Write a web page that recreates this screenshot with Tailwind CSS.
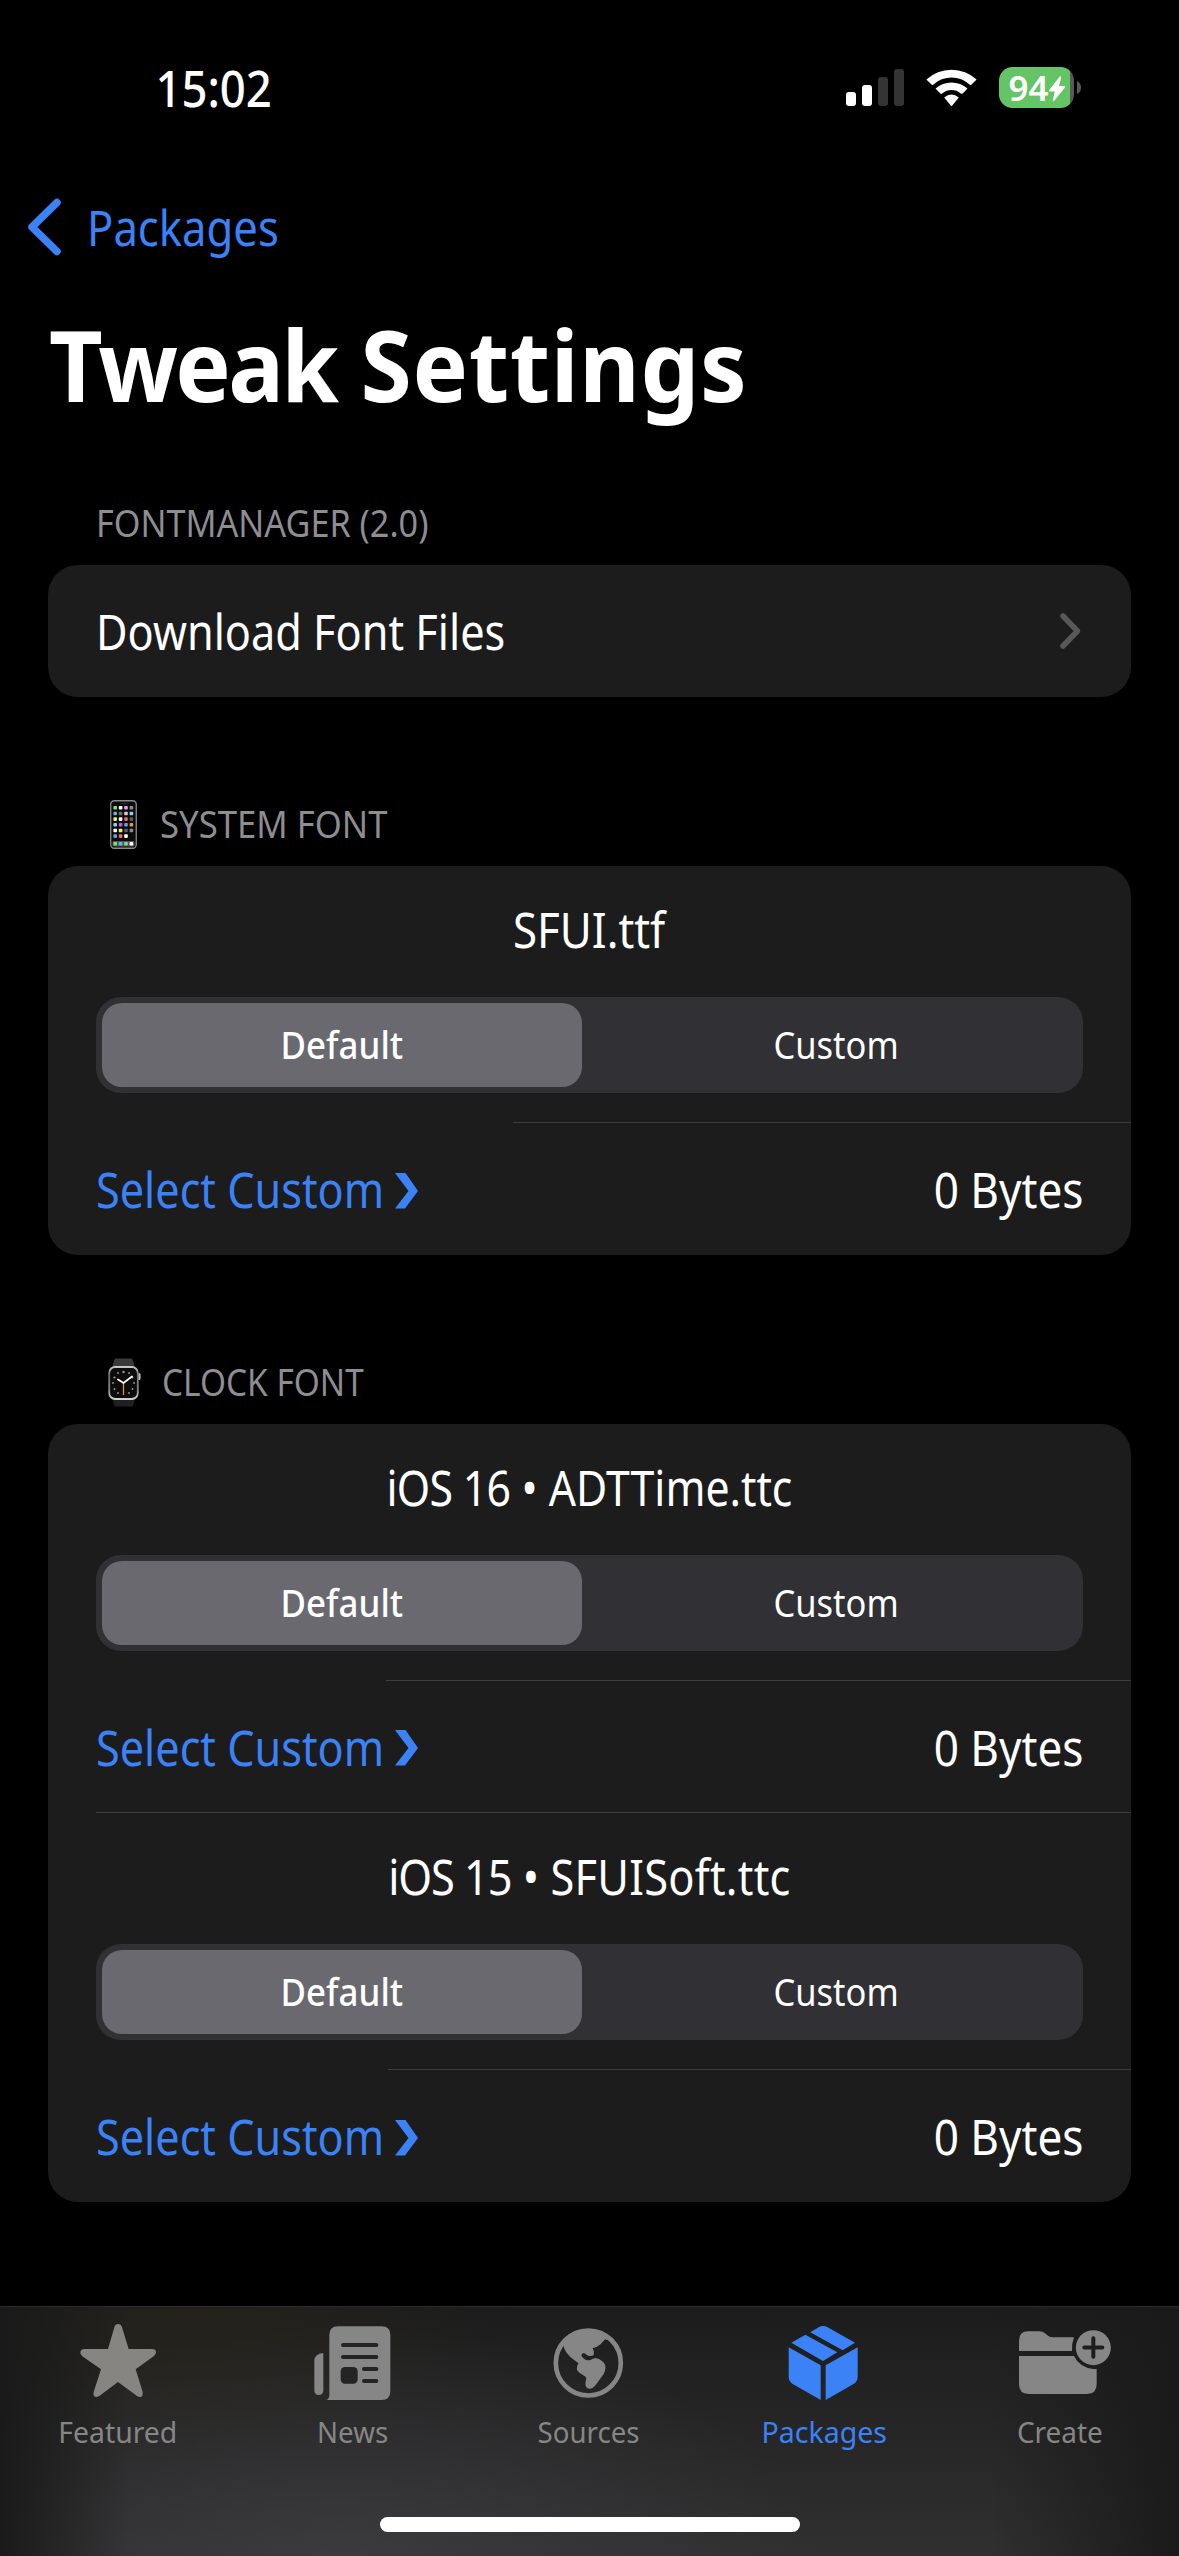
<!DOCTYPE html>
<html lang="en">
<head>
<meta charset="utf-8">
<title>Tweak Settings</title>
<script src="https://cdn.jsdelivr.net/npm/@tailwindcss/browser@4"></script>
</head>
<body class="bg-black text-white font-['Noto_Sans',sans-serif] antialiased">
<div class="w-[1179px] h-[2556px] flex flex-col overflow-hidden bg-black whitespace-nowrap">

  <!-- Status bar -->
  <header class="h-[175px] pl-[150px] pr-[97px] flex items-center justify-between shrink-0">
    <span class="w-[127px] flex justify-center text-[50.5px] leading-[60px] font-medium"><span class="scale-x-[0.9]">15:02</span></span>
    <svg class="w-[236px] h-[42px] overflow-visible" viewBox="846 67 236 42">
      <g fill="#fff"><rect x="846" y="92" width="10" height="14" rx="3"/><rect x="862" y="85" width="10" height="21" rx="3"/></g>
      <g fill="#333"><rect x="878" y="77" width="10" height="29" rx="3"/><rect x="894" y="69" width="10" height="37" rx="3"/></g>
      <g fill="#fff">
        <path d="M926.4 79.6A37 37 0 0 1 976.6 79.6L971.5 84.6Q970.5 85.3 969.6 84.4A27 27 0 0 0 933.4 84.4Q932.5 85.3 931.5 84.6Z"/>
        <path d="M935.5 88.6A24 24 0 0 1 967.5 88.6L962.6 93.5Q961.7 94.2 960.8 93.5A14.5 14.5 0 0 0 942.2 93.5Q941.3 94.2 940.4 93.5Z"/>
        <path d="M944.2 97.6Q951.5 91.2 958.8 97.6L952.3 105.5Q951.5 106.4 950.7 105.5Z"/>
      </g>
      <clipPath id="bat"><rect x="999" y="67" width="75" height="41" rx="13.5"/></clipPath>
      <g clip-path="url(#bat)"><rect x="999" y="67" width="71" height="41" fill="#65c466"/><rect x="1070" y="67" width="5" height="41" fill="#59595b"/></g>
      <path d="M1077 81Q1081 83 1081 87.5Q1081 92 1077 94Z" fill="#59595b"/>
      <text x="1008.5" y="100.500" font-size="34.5" font-weight="600" fill="#fff" textLength="40" lengthAdjust="spacingAndGlyphs">94</text>
      <path d="M1059.800 76.600L1049 90.200Q1048.600 91.600 1050 91.600H1054.800L1052.800 100.400Q1053 101.800 1054.200 100.800L1065 87.600Q1065.600 86 1064.200 86H1059L1061.200 77.400Q1061 75.800 1059.800 76.600Z" fill="#fff"/>
    </svg>
  </header>

  <!-- Navigation -->
  <nav class="h-[103px] pl-[27px] flex items-center shrink-0 text-[#3b82f7]">
    <svg class="w-[35px] h-[58px] mr-[25px]" viewBox="0 0 35 58" fill="none" stroke="currentColor" stroke-width="7.500" stroke-linecap="round" stroke-linejoin="round"><path d="M30 4.500L5 29L30 53.500"/></svg>
    <a class="text-[49px] leading-[60px] origin-left scale-x-[0.89]">Packages</a>
  </nav>
  <h1 class="h-[169px] pt-[3px] pl-[49px] flex items-center shrink-0 text-[99px] leading-[120px] font-bold"><span class="origin-left scale-x-[0.94]"><span class="tracking-[-2.8px]">Tweak</span> <span class="tracking-[0.7px]">Settings</span></span></h1>

  <main class="flex-1 px-[48px] flex flex-col">
    <h2 class="h-[118px] pb-[17px] pl-[48px] flex items-end text-[#8d8d92] text-[37.5px] leading-[50px]"><span class="origin-left scale-x-[0.912]">FONTMANAGER (2.0)</span></h2>
    <section class="h-[132px] rounded-[30px] bg-[#1c1c1c] pl-[48px] pr-[49px] flex items-center justify-between">
      <span class="text-[49px] leading-[60px] origin-left scale-x-[0.883]">Download Font Files</span>
      <svg class="w-[23px] h-[38px]" viewBox="0 0 23 38" fill="none" stroke="#58585b" stroke-width="5.500" stroke-linecap="round" stroke-linejoin="round"><path d="M4 4L18.500 19L4 34"/></svg>
    </section>

    <h2 class="h-[169px] pb-[17px] pl-[62px] flex items-end text-[#8d8d92] text-[37.5px] leading-[50px]">
      <span class="h-[50px] flex items-center">
        <svg class="w-[27px] h-[49px] mr-[23px]" viewBox="0 0 27 49">
          <rect x=".75" y=".75" width="25.500" height="47.500" rx="3.500" fill="#0b0b0c" stroke="#8b8b8d" stroke-width="1.300"/>
          <rect x="10" y="2.500" width="8" height="2" rx="1" fill="#222"/>
          <rect x="2.500" y="41" width="22" height="5.500" rx="1" fill="#555"/>
          <g id="apps"></g>
        </svg>
        <span class="origin-left scale-x-[0.925]">SYSTEM FONT</span>
      </span>
    </h2>
    <section class="rounded-[30px] bg-[#1c1c1c] overflow-hidden">
      <div class="h-[131px] pb-[5px] flex items-center justify-center text-[49px] leading-[60px]"><span class="scale-x-[0.895]">SFUI.ttf</span></div>
      <div class="h-[96px] mx-[48px] p-[6px] rounded-[25px] bg-[#313035] flex text-[37.5px] leading-[50px]">
        <div class="w-[480px] rounded-[20px] bg-[#6a696f] flex items-center justify-center font-medium"><span class="scale-x-[0.93]">Default</span></div>
        <div class="flex-1 pl-[14px] flex items-center justify-center"><span class="scale-x-[0.92]">Custom</span></div>
      </div>
      <div class="mt-[29px] ml-[465px] h-px bg-[#3d3d3f]"></div>
      <div class="h-[132px] px-[48px] flex items-center justify-between text-[49px] leading-[60px]">
        <span class="flex items-center text-[#3b82f7]"><span class="w-[299px] origin-left scale-x-[0.882]">Select Custom</span><svg class="w-[23px] h-[36px] mt-[3px]" viewBox="0 0 23 36" fill="currentColor"><path d="M0 0H10.500L23 18L10 35.500H0L13.500 18Z"/></svg></span>
        <span class="origin-right scale-x-[0.9]">0 Bytes</span>
      </div>
    </section>

    <h2 class="h-[169px] pb-[17px] pl-[60px] flex items-end text-[#8d8d92] text-[37.5px] leading-[50px]">
      <span class="h-[50px] flex items-center">
        <svg class="w-[33px] h-[49px] mr-[21px]" viewBox="0 0 33 49">
          <defs><linearGradient id="rim" x1="0" y1="0" x2="0" y2="1"><stop offset="0" stop-color="#c9c9c9"/><stop offset=".25" stop-color="#6d6d6d"/><stop offset=".7" stop-color="#858585"/><stop offset="1" stop-color="#d0d0d0"/></linearGradient></defs>
          <path d="M7 0.500H24Q26 4 26.500 10H4.500Q5 4 7 .5Z" fill="#3a3a3c"/>
          <path d="M4.500 40H26.500Q26.500 45 24.500 48.500H7Q5 45 4.500 40Z" fill="#202022"/>
          <rect x="29" y="15" width="3.600" height="7" rx="1.600" fill="#b8b8b8"/>
          <rect x="1.200" y="9" width="28.600" height="32" rx="6" fill="#0c0c0d" stroke="url(#rim)" stroke-width="1.800"/>
          <g fill="#9a9a9a"><circle cx="15.500" cy="14" r="1.200"/><circle cx="10" cy="15" r=".9"/><circle cx="21" cy="15" r=".9"/><circle cx="6.500" cy="19.500" r="1.100"/><circle cx="24.500" cy="19.500" r=".9"/><circle cx="5" cy="25" r=".9"/><circle cx="26" cy="25" r=".9"/><circle cx="6.500" cy="31" r=".9"/><circle cx="24.500" cy="31" r=".9"/><circle cx="10" cy="35" r=".9"/><circle cx="21" cy="35" r=".9"/></g>
          <path d="M15.500 25V37" stroke="#d8962c" stroke-width="1.300"/>
          <path d="M10 21.500L15.500 25L24 18.500" fill="none" stroke="#fff" stroke-width="1.800" stroke-linecap="round"/>
        </svg>
        <span class="origin-left scale-x-[0.89]">CLOCK FONT</span>
      </span>
    </h2>
    <section class="rounded-[30px] bg-[#1c1c1c] overflow-hidden">
      <div class="h-[131px] pb-[5px] flex items-center justify-center text-[49px] leading-[60px]"><span class="scale-x-[0.873]"><span class="tracking-[-0.8px]">iOS 16</span> • ADTTime.ttc</span></div>
      <div class="h-[96px] mx-[48px] p-[6px] rounded-[25px] bg-[#313035] flex text-[37.5px] leading-[50px]">
        <div class="w-[480px] rounded-[20px] bg-[#6a696f] flex items-center justify-center font-medium"><span class="scale-x-[0.93]">Default</span></div>
        <div class="flex-1 pl-[14px] flex items-center justify-center"><span class="scale-x-[0.92]">Custom</span></div>
      </div>
      <div class="mt-[29px] ml-[338px] h-px bg-[#3d3d3f]"></div>
      <div class="h-[131px] px-[48px] flex items-center justify-between text-[49px] leading-[60px]">
        <span class="flex items-center text-[#3b82f7]"><span class="w-[299px] origin-left scale-x-[0.882]">Select Custom</span><svg class="w-[23px] h-[36px] mt-[3px]" viewBox="0 0 23 36" fill="currentColor"><path d="M0 0H10.500L23 18L10 35.500H0L13.500 18Z"/></svg></span>
        <span class="origin-right scale-x-[0.9]">0 Bytes</span>
      </div>
      <div class="ml-[48px] h-px bg-[#3d3d3f]"></div>
      <div class="h-[131px] pb-[5px] flex items-center justify-center text-[49px] leading-[60px]"><span class="scale-x-[0.885]"><span class="tracking-[-1.2px]">iOS 15</span> • <span class="tracking-[0.3px]">SFUISoft.ttc</span></span></div>
      <div class="h-[96px] mx-[48px] p-[6px] rounded-[25px] bg-[#313035] flex text-[37.5px] leading-[50px]">
        <div class="w-[480px] rounded-[20px] bg-[#6a696f] flex items-center justify-center font-medium"><span class="scale-x-[0.93]">Default</span></div>
        <div class="flex-1 pl-[14px] flex items-center justify-center"><span class="scale-x-[0.92]">Custom</span></div>
      </div>
      <div class="mt-[29px] ml-[340px] h-px bg-[#3d3d3f]"></div>
      <div class="h-[132px] px-[48px] flex items-center justify-between text-[49px] leading-[60px]">
        <span class="flex items-center text-[#3b82f7]"><span class="w-[299px] origin-left scale-x-[0.882]">Select Custom</span><svg class="w-[23px] h-[36px] mt-[3px]" viewBox="0 0 23 36" fill="currentColor"><path d="M0 0H10.500L23 18L10 35.500H0L13.500 18Z"/></svg></span>
        <span class="origin-right scale-x-[0.9]">0 Bytes</span>
      </div>
    </section>
  </main>

  <!-- Tab bar -->
  <footer class="h-[250px] shrink-0 border-t border-[#2c2c2c] pt-[15px] bg-[linear-gradient(to_right,#1a1a1a,rgba(26,26,26,0)_11%,rgba(26,26,26,0)_84%,#1a1a1a),radial-gradient(ellipse_300px_160px_at_190px_0px,rgba(46,42,24,0.4),transparent),radial-gradient(ellipse_480px_230px_at_340px_250px,rgba(76,76,82,0.4),transparent),linear-gradient(to_bottom,#1c1c1c,#303031)]">
    <div class="grid grid-cols-5 text-[28.5px] leading-[40px] font-normal text-[#868685]">
      <div class="flex flex-col items-center">
        <svg class="w-[100px] h-[80px]" viewBox="204 126 300 240" fill="#868581"><path d="M324 207L343 142Q346 132 354 132Q363 132 366 142L386 207H456Q468 207 468 217Q468 224 461 229L407 268L428 336Q430 351 420 351Q415 351 410 347L354 306L299 347Q293 351 288 351Q278 350 281 336L303 268L247 229Q240 224 241 216Q243 207 253 207Z"/></svg>
        <span class="mt-[10px] scale-x-[0.995]">Featured</span>
      </div>
      <div class="flex flex-col items-center">
        <svg class="w-[100px] h-[80px]" viewBox="911 126 300 240" fill="#868686"><path d="M987 165Q987 139 1013 139H1144Q1170 139 1170 165V334Q1170 360 1144 360H978Q987 356 987 345Z"/><path d="M969 219V331Q969 345 955.500 345Q942 345 942 331V242Q942 222 969 219Z"/><g fill="#242424"><rect x="1022" y="189" width="112" height="12" rx="6"/><rect x="1022" y="225" width="112" height="12" rx="6"/><rect x="1021" y="261" width="51" height="50" rx="13"/><rect x="1085" y="261" width="49" height="12" rx="6"/><rect x="1085" y="297" width="49" height="12" rx="6"/></g></svg>
        <span class="mt-[10px] mr-[2px] scale-x-[0.97]">News</span>
      </div>
      <div class="flex flex-col items-center">
        <svg class="w-[100px] h-[80px]" viewBox="418.500 126 300 240" fill="#868686"><circle cx="566.500" cy="249" r="97.500" fill="none" stroke="#868686" stroke-width="14"/><path d="M490 190Q493 207 500 217Q510 231 525 241L537 250Q531 258 532 268Q533 273 540 278L558 290Q562 294 559 303Q555 317 563 324Q570 328 578 325Q587 319 595 306L612 283Q618 272 618 262Q617 253 612 247Q600 235 588 234Q580 235 573 240Q566 242 558 239Q546 232 546 225Q547 219 554 219Q561 225 567 227Q577 230 583 224Q586 214 579 205Q592 203 603 193L617 178L622 180L630 176L600 156L566 148L530 156L500 178Z"/></svg>
        <span class="mt-[10px] mr-[2px] scale-x-[0.97]">Sources</span>
      </div>
      <div class="flex flex-col items-center text-[#3b82f7]">
        <svg class="w-[100px] h-[80px]" viewBox="46 126 300 240" fill="currentColor"><path d="M95 188L137 164L233 217L190 243Z"/><path d="M152 157L177 142Q190 134 204 142L286 188L249 211Z"/><path d="M87 202L183 256V360L98 311Q87 304 87 291Z"/><path d="M294 202L198 256V360L283 311Q294 304 294 291Z"/></svg>
        <span class="mt-[10px] mr-[2px]">Packages</span>
      </div>
      <div class="flex flex-col items-center">
        <svg class="w-[100px] h-[80px]" viewBox="753 126 300 240" fill="#868686"><path d="M777 213V182Q777 154 805 154H838Q848 154 855 160L865 168Q870 172 879 172H942Q935 190 936 213Z"/><path d="M777 228H942Q958 262 1000 267H1010V313Q1010 342 981 342H806Q777 342 777 313Z"/><circle cx="1000" cy="203" r="52.500"/><path d="M973 202.500H1027M1000 175V230" stroke="#1e1e1e" stroke-width="12" stroke-linecap="round"/></svg>
        <span class="mt-[10px] mr-[2px] scale-x-[0.98]">Create</span>
      </div>
    </div>
    <div class="mt-[65px] mx-auto w-[420px] h-[15px] rounded-full bg-white"></div>
  </footer>
</div>
<script>
  // App icons on the small phone: 4 columns, 6 rows and a dock
  const rows = [
    ['#7be06f','#fff','#e3a0f5','#8c8c8c'],
    ['#56b3ee','#6a6a6a','#e0c9ae','#7ad7f5'],
    ['#f3ec6a','#fff','#e8695c','#5a5a5a'],
    ['#6fdcef','#d453dd','#4fa9f0','#f0952a'],
    ['#fff','#f5ee6c','#5c5c5c','#8c8c8c'],
    ['#4fa9f0','#ec6a5e','#fff',null],
    ['#7be06f','#56b9f5','#7be06f','#fff']
  ];
  const y0 = [6, 11.7, 17.3, 23, 28.7, 34.3, 42];
  document.getElementById('apps').innerHTML = rows.map((r, i) => r.map((c, j) =>
    c ? `<rect x="${3.4 + j * 5.4}" y="${y0[i]}" width="3.6" height="3.6" rx=".8" fill="${c}"/>` : '').join('')).join('');
</script>
</body>
</html>
